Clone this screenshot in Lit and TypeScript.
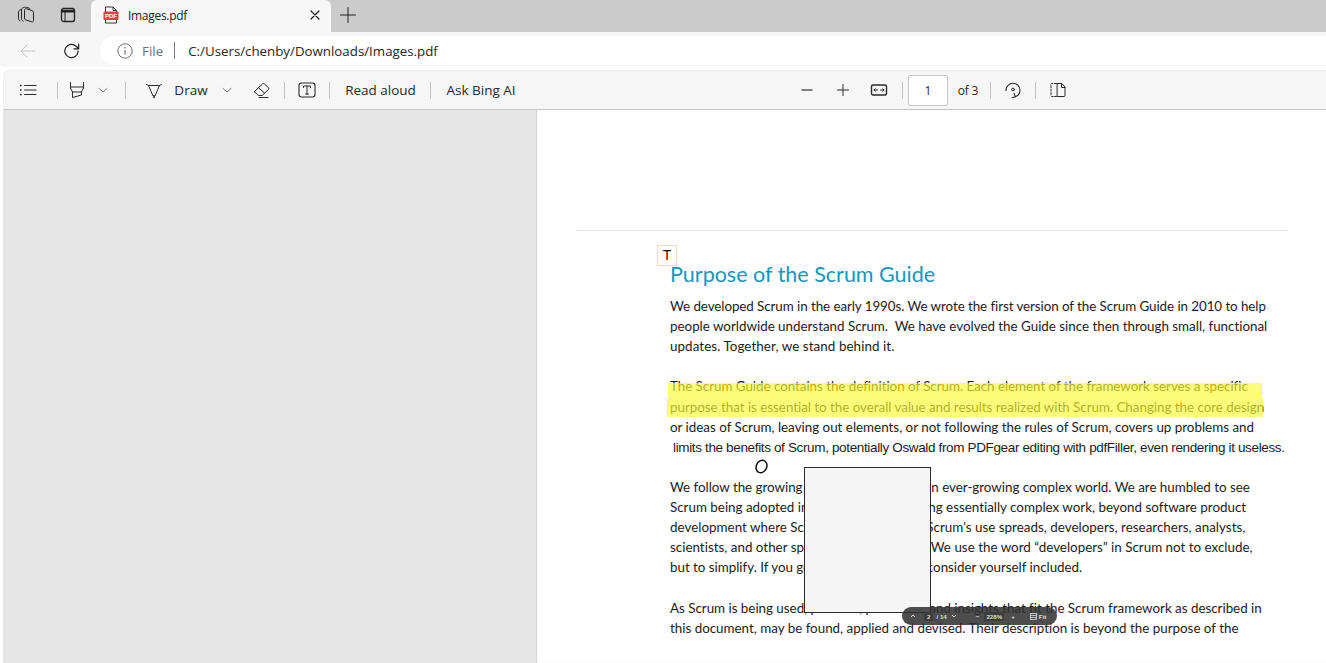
import { LitElement, html, css, svg } from "lit";
import { customElement } from "lit/decorators.js";

const BODY_FONT = '13.4px Lato';
const ARIAL_FONT = '13.5px "Liberation Sans"';

// one text line of the pdf page and the width it takes in the scan
type Line = { text: string; width: number; arial?: boolean };

const paragraphs: Line[][] = [
  [
    { text: "We developed Scrum in the early 1990s. We wrote the first version of the Scrum Guide in 2010 to help", width: 597 },
    { text: "people worldwide understand Scrum.\u00a0 We have evolved the Guide since then through small, functional", width: 598 },
    { text: "updates. Together, we stand behind it.", width: 225 },
  ],
  [
    { text: "The Scrum Guide contains the definition of Scrum. Each element of the framework serves a specific", width: 578 },
    { text: "purpose that is essential to the overall value and results realized with Scrum. Changing the core design", width: 595 },
    { text: "or ideas of Scrum, leaving out elements, or not following the rules of Scrum, covers up problems and", width: 585 },
    { text: "limits the benefits of Scrum, potentially Oswald from PDFgear editing with pdfFiller, even rendering it useless.", width: 612, arial: true },
  ],
  [
    { text: "We follow the growing use of Scrum within an ever-growing complex world. We are humbled to see", width: 581 },
    { text: "Scrum being adopted in many domains holding essentially complex work, beyond software product", width: 577 },
    { text: "development where Scrum has its roots. As Scrum’s use spreads, developers, researchers, analysts,", width: 576 },
    { text: "scientists, and other specialists do the work. We use the word “developers” in Scrum not to exclude,", width: 584 },
    { text: "but to simplify. If you get value from Scrum, consider yourself included.", width: 414 },
  ],
  [
    { text: "As Scrum is being used, patterns, processes, and insights that fit the Scrum framework as described in", width: 591 },
    { text: "this document, may be found, applied and devised. Their description is beyond the purpose of the", width: 570 },
  ],
];

const ctx = document.createElement("canvas").getContext("2d")!;

const spacing = (line: Line) => {
  ctx.font = line.arial ? ARIAL_FONT : BODY_FONT;
  const natural = ctx.measureText(line.text).width;
  return (line.width - natural) / (line.text.length - 1);
};

const icon = (body: unknown, size = 18) => html`<svg
  width=${size}
  height=${size}
  viewBox="0 0 18 18"
  fill="none"
  stroke="currentColor"
  stroke-width="1"
  stroke-linecap="round"
  stroke-linejoin="round"
>
  ${body}
</svg>`;

const chevron = html`<span class="chev">${icon(svg`<path d="M5 7.500l4 3.500 4-3.500" />`)}</span>`;

@customElement("app-root")
export class AppRoot extends LitElement {
  static styles = css`
    :host {
      display: block;
      width: 1326px;
      height: 663px;
      overflow: hidden;
      background: #fff;
      color: #222;
      font-family: "Open Sans", "Noto Sans", sans-serif;
    }
    .tabstrip {
      display: flex;
      align-items: flex-end;
      height: 32px;
      background: #cbcbcb;
    }
    .strip-btn {
      display: flex;
      justify-content: center;
      align-items: center;
      width: 42px;
      height: 32px;
      padding-bottom: 2px;
      box-sizing: border-box;
    }
    .strip-btn.first {
      margin-left: 5px;
    }
    .strip-btn.plus {
      width: 34px;
    }
    .tab {
      display: flex;
      align-items: center;
      width: 240px;
      height: 32px;
      margin-left: 2px;
      padding: 0 7px 2px 11px;
      box-sizing: border-box;
      background: #f7f7f7;
      border-radius: 6px 6px 0 0;
    }
    .tab-title {
      flex: 1;
      margin-left: 8px;
      font-size: 12px;
      letter-spacing: -0.3px;
    }
    .addressbar {
      display: flex;
      align-items: center;
      height: 35px;
      padding-top: 2px;
      box-sizing: border-box;
      background: #f7f7f7;
    }
    .nav {
      display: flex;
      justify-content: center;
      align-items: center;
      width: 44px;
    }
    .nav.back {
      margin-left: 6px;
      color: #c4c4c4;
    }
    .pill {
      display: flex;
      flex: 1;
      align-items: center;
      height: 29px;
      margin-left: 6px;
      padding-left: 17px;
      background: #fff;
      border-radius: 15px 0 0 15px;
      font-size: 13.3px;
    }
    .file {
      margin-left: 9px;
      color: #707070;
      font-size: 13.4px;
    }
    .pill-sep {
      width: 1px;
      height: 17px;
      margin: 0 13px 0 11px;
      background: #777;
    }
    .url {
      color: #262626;
    }
    .toolbar {
      display: grid;
      grid-template-columns: 48px 10px 30px 22px 22px 36px 38px 34px 36px 8px 38px 6px 97px 2px 100px 258px 36px 36px 36px 10px 42px 38px 6px 40px 4px 42px;
      align-items: center;
      justify-items: center;
      height: 40px;
      box-sizing: border-box;
      margin: 3px 0 0 3px;
      background: #f6f6f6;
      border-bottom: 1px solid #c6c6c6;
      border-top: 1px solid #efefef;
      border-left: 1px solid #efefef;
      border-radius: 6px 0 0 0;
      font-size: 13.5px;
      color: #2a2a2a;
    }
    .toolbar svg {
      display: block;
    }
    .chev {
      color: #777;
    }
    .sep {
      width: 1px;
      height: 17px;
      background: #c2c2c2;
    }
    .page-input {
      display: flex;
      justify-content: center;
      align-items: center;
      width: 40px;
      height: 31px;
      box-sizing: border-box;
      background: #fff;
      border: 1px solid #c9c9c9;
      border-radius: 2px;
      font-size: 12px;
    }
    .small {
      font-size: 12px;
      letter-spacing: -0.2px;
    }
    .main {
      display: flex;
      height: 553px;
    }
    .side {
      flex: none;
      width: 533px;
      margin-left: 3px;
      background: #e6e6e6;
    }
    .page {
      position: relative;
      flex: 1;
      min-width: 0;
      padding: 120px 39px 0 41px;
      background: #fff;
      box-shadow: inset 1px 0 1px #d4d4d4;
    }
    .rule {
      height: 1px;
      background: #e4e4e4;
    }
    .rule.bottom {
      background: #c4c4c4;
    }
    .body {
      height: 407px;
      padding-left: 93px;
      font-family: Lato, "Open Sans", sans-serif;
      font-size: 13.4px;
      line-height: 20.1px;
      color: #1c1c1c;
      white-space: nowrap;
    }
    h1 {
      margin: 30px 0 8px;
      height: 27px;
      font-size: 21.5px;
      line-height: 27px;
      font-weight: 400;
      color: #1497bd;
    }
    p {
      margin: 0 0 20.2px;
    }
    .line {
      display: block;
    }
    .line.arial {
      margin: 1px 0 -1px 3px;
      font-family: "Liberation Sans", Arial, sans-serif;
      font-size: 13.5px;
    }
    .highlight {
      position: absolute;
      background: rgba(250, 250, 50, 0.66);
    }
    .hl1 {
      left: 132px;
      top: 273px;
      width: 594px;
      height: 15px;
    }
    .hl2 {
      left: 131px;
      top: 288px;
      width: 596px;
      height: 19px;
    }
    .t-box {
      position: absolute;
      left: 121px;
      top: 135px;
      width: 20px;
      height: 21px;
      box-sizing: border-box;
      border: 1px solid #f5d9b8;
      text-align: center;
      font-family: "Liberation Sans", Arial, sans-serif;
      font-size: 14px;
      line-height: 19px;
      color: #111;
    }
    .circle {
      position: absolute;
      left: 218px;
      top: 349px;
      width: 15px;
      height: 15px;
    }
    .blank {
      position: absolute;
      left: 268px;
      top: 357px;
      width: 127px;
      height: 146px;
      box-sizing: border-box;
      background: #f5f5f5;
      border: 1.5px solid #2b2b2b;
    }
    .float-bar {
      position: absolute;
      left: 366px;
      top: 497px;
      display: flex;
      align-items: center;
      width: 155px;
      height: 18px;
      box-sizing: border-box;
      padding-left: 8px;
      background: rgba(48, 48, 48, 0.86);
      border-radius: 9px;
      color: #ddd;
      font-family: "Liberation Sans", Arial, sans-serif;
      font-size: 6.2px;
      font-weight: 700;
    }
    .float-bar span,
    .float-bar svg {
      flex: none;
      white-space: nowrap;
    }
    .fb-num {
      margin-left: 8px;
      padding: 1px 3px;
      background: #3d3d3d;
    }
    .fb-of {
      margin-left: 3px;
    }
    .fb-next {
      margin-left: 4px;
    }
    .fb-minus {
      margin-left: 19px;
    }
    .fb-zoom {
      margin-left: 5px;
      padding: 1px 2px;
      background: #3d3d3d;
    }
    .fb-plus {
      margin-left: 7px;
    }
    .fb-fit {
      margin-left: 15px;
    }
    .fb-fit-label {
      margin-left: 2px;
    }
  `;

  render() {
    return html`
      <div class="tabstrip">
        <div class="strip-btn first">
          ${icon(svg`
            <path d="M1.500 6v6.500c0 1.100.5 1.800 1.500 2.300" />
            <path d="M4.500 3.800v9c0 1.100.6 1.800 1.600 2.300" />
            <path d="M7.500 4c0-1 .8-1.600 1.800-1.300l6 2c.8.300 1.200.8 1.200 1.600v8.200c0 1-.8 1.600-1.800 1.300l-6-1.900c-.8-.3-1.200-.9-1.200-1.600z" />
            <path d="M1.500 6c0-1 .7-1.800 1.700-2.100l1.300-.4M4.500 3.800c0-1 .7-1.800 1.700-2.100L7.500 1.300c.8-.2 1.500-.1 2.200.1l3 1" />
          `)}
        </div>
        <div class="strip-btn">
          ${icon(svg`
            <rect x="2.500" y="2.500" width="13" height="13" rx="2" stroke-width="1.300" />
            <path d="M2.500 5.200h13" stroke-width="2.600" stroke-linecap="butt" />
            <path d="M6 6v9.500" />
          `)}
        </div>
        <div class="tab">
          <svg width="18" height="18" viewBox="0 0 18 18">
            <path d="M3.500 1h7.500l3.500 3.500V17h-11z" fill="#fff" stroke="#333" />
            <path d="M11 1v3.500h3.500" fill="none" stroke="#333" />
            <rect x="1.500" y="5.500" width="15" height="8.500" rx="1" fill="#ee3a43" />
            <text x="9" y="11.900" text-anchor="middle" font-family="Liberation Sans" font-size="6" font-weight="700" fill="#fff">PDF</text>
          </svg>
          <span class="tab-title">Images.pdf</span>
          ${icon(svg`<path d="M5 5l8 8M13 5l-8 8" stroke-width="1.200" />`)}
        </div>
        <div class="strip-btn plus">
          ${icon(svg`<path d="M9 1.500v15M1.500 9h15" stroke-width="1" />`)}
        </div>
      </div>

      <div class="addressbar">
        <div class="nav back">
          ${icon(svg`<path d="M2 9h14M8 3L2 9l6 6" />`)}
        </div>
        <div class="nav">
          ${icon(svg`<path d="M14.500 9a6 6 0 1 1-1.800-4.300L15 7M15 2.800V7h-4.200" stroke-width="1.100" />`, 20)}
        </div>
        <div class="pill">
          <svg width="16" height="16" viewBox="0 0 16 16" fill="none" stroke="#707070">
            <circle cx="8" cy="8" r="7.200" />
            <path d="M8 7v4.500" stroke-width="1.200" />
            <circle cx="8" cy="4.700" r=".8" fill="#707070" stroke="none" />
          </svg>
          <span class="file">File</span>
          <span class="pill-sep"></span>
          <span class="url">C:/Users/chenby/Downloads/Images.pdf</span>
        </div>
      </div>

      <div class="toolbar">
        ${icon(svg`
          <path d="M5.500 4.500H17M5.500 9H17M5.500 13.500H17" />
          <path d="M1 4.500h1.600M1 9h1.600M1 13.500h1.600" stroke-width="1.600" stroke-linecap="butt" />
        `)}
        <span class="sep"></span>
        ${icon(svg`
          <path d="M2.500 1.500v5.500M15.500 1.500V7" />
          <path d="M2.500 6h13" />
          <path d="M2.500 7l2 4h9l2-4" />
          <path d="M4.500 11v5.500l9-2.500v-3" />
        `)}
        ${chevron}
        <span class="sep"></span>
        ${icon(svg`
          <path d="M1.500 3.500l2 1h11l2-1" />
          <path d="M3.500 4.500l4.500 10.500h2l4.500-10.500" />
          <path d="M9 15v1.500" stroke-width="1.600" />
        `)}
        <span>Draw</span>
        ${chevron}
        ${icon(svg`
          <path d="M1.500 10.500L9.500 3c.6-.5 1.300-.5 1.800 0l4.200 3.700c.6.500.6 1.200 0 1.800L9 14.500H6z" />
          <path d="M5.500 6.800l6 5.200" />
          <path d="M6 16.500h9" />
        `)}
        <span class="sep"></span>
        ${icon(svg`
          <rect x="1" y="2" width="16" height="14" rx="2.500" stroke-width="1.100" />
          <path d="M5.500 6.500V5h7v1.500M9 5v8M7.500 13h3" />
        `)}
        <span class="sep"></span>
        <span>Read aloud</span>
        <span class="sep"></span>
        <span>Ask Bing AI</span>
        <span></span>
        ${icon(svg`<path d="M4 9h10" stroke-width="1.300" stroke="#555" />`)}
        ${icon(svg`<path d="M9 3.500v11M3.500 9h11" />`)}
        ${icon(svg`
          <rect x="1.500" y="4" width="15" height="10" rx="1.500" stroke-width="1.400" />
          <path d="M4 9h3.500M10.500 9H14" />
          <path d="M5.200 7.800L4 9l1.200 1.200M12.800 7.800L14 9l-1.200 1.200" />
        `)}
        <span class="sep"></span>
        <div class="page-input">1</div>
        <span class="small">of 3</span>
        <span class="sep"></span>
        ${icon(svg`
          <path d="M2 9.500C2 5.400 5.100 2.300 9 2.300s7 3.100 7 6.900c0 3-1.800 5.400-4.600 6.500" stroke-width="1.100" />
          <path d="M10 12.200l1.400 3.500-3.400 1" stroke-width="1.100" />
          <circle cx="9" cy="8.500" r="1.400" />
        `)}
        <span class="sep"></span>
        ${icon(svg`
          <path d="M7.500 2.500H3a1 1 0 0 0-1 1v11a1 1 0 0 0 1 1h4.500" stroke-dasharray="2 1.500" />
          <path d="M8.500 2.500H13l3 3.500v8.500a1 1 0 0 1-1 1H8.500z" />
          <path d="M12.500 2.500v4H16" />
        `)}
      </div>

      <div class="main">
        <div class="side"></div>
        <div class="page">
          <div class="rule"></div>
          <div class="body">
            <h1>Purpose of the Scrum Guide</h1>
            ${paragraphs.map(
              (lines) => html`<p>
                ${lines.map(
                  (line) =>
                    html`<span
                      class="line ${line.arial ? "arial" : ""}"
                      style="letter-spacing: ${spacing(line).toFixed(3)}px"
                      >${line.text}</span
                    >`,
                )}
              </p>`,
            )}
          </div>
          <div class="rule bottom"></div>

          <div class="highlight hl1"></div>
          <div class="highlight hl2"></div>
          <div class="t-box">T</div>
          <svg class="circle" viewBox="0 0 15 15" fill="none" stroke="#111" stroke-width="1.500">
            <ellipse cx="7.500" cy="7.500" rx="5.200" ry="6.500" transform="rotate(24 7.500 7.500)" />
          </svg>
          <div class="blank"></div>
          <div class="float-bar">
            <svg width="6" height="6" viewBox="0 0 6 6" fill="none" stroke="#ddd"><path d="M1 4l2-2 2 2" /></svg>
            <span class="fb-num">2</span>
            <span class="fb-of">/ 14</span>
            <svg class="fb-next" width="6" height="6" viewBox="0 0 6 6" fill="none" stroke="#ddd"><path d="M1 2l2 2 2-2" /></svg>
            <span class="fb-minus">−</span>
            <span class="fb-zoom">228%</span>
            <span class="fb-plus">+</span>
            <svg class="fb-fit" width="7" height="7" viewBox="0 0 7 7" fill="none" stroke="#ddd" stroke-width=".8"><rect x=".5" y=".5" width="6" height="6" /><path d="M.5 2.500h6M.5 4.500h6" /></svg>
            <span class="fb-fit-label">Fit</span>
          </div>
        </div>
      </div>
    `;
  }
}
